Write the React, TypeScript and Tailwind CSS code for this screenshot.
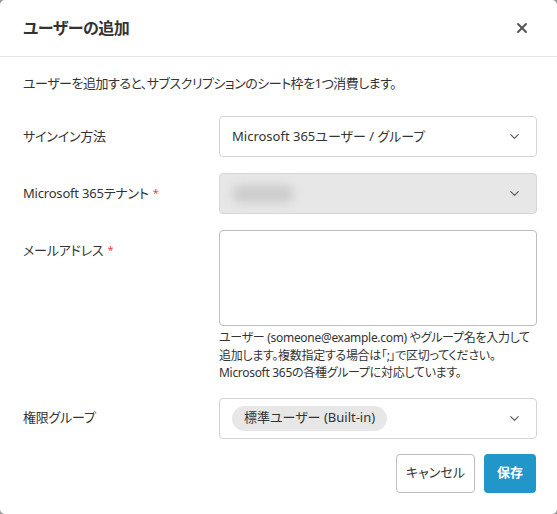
import { ChevronDown, X } from "lucide-react";

const font = { fontFamily: '"Noto Sans", "Noto Sans CJK JP", sans-serif' };

const Label = ({ text, required }: { text: string; required?: boolean }) => (
    <div className="h-[41px] flex items-center text-[13px] text-[#333] tracking-[-0.2px]">
        {text}
        {required && <span className="ml-[4px] text-[11px] text-[#e0484b]">*</span>}
    </div>
);

const SelectBox = ({ children, disabled }: { children?: React.ReactNode; disabled?: boolean }) => (
    <div
        className={`h-[41px] rounded-[4px] border flex items-center pl-[12px] pr-[14px] ${disabled ? "bg-[#e6e7e6] border-[#d6d6d6]" : "bg-white border-[#d3d3d3]"}`}
    >
        <div className="flex-1 flex items-center text-[13px] text-[#333]">{children}</div>
        <ChevronDown className="size-[15px] text-[#555]" strokeWidth={1.75} />
    </div>
);

export default function App() {
    return (
        <div className="h-[514px] w-[557px] bg-[#9a9a9a] [font-feature-settings:'palt']" style={font}>
            <div className="h-full w-full bg-white rounded-[5px] flex flex-col">
                <div className="h-[57px] px-[23px] pr-[27px] flex items-center justify-between border-b border-[#e4e4e4]">
                    <h2 className="text-[16px] font-bold text-[#333] tracking-[-0.5px]">ユーザーの追加</h2>
                    <X className="size-[16px] text-[#555]" strokeWidth={3} />
                </div>

                <div className="pl-[23px] pr-[20px] pt-[15px]">
                    <p className="text-[13px] text-[#333] leading-[22px] tracking-[-0.5px]">
                        ユーザーを追加すると、サブスクリプションのシート枠を1つ消費します。
                    </p>

                    <div className="mt-[22px] grid grid-cols-[196px_1fr] gap-y-[16px] items-start">
                        <Label text="サインイン方法" />
                        <SelectBox>Microsoft 365ユーザー / グループ</SelectBox>

                        <Label text="Microsoft 365テナント" required />
                        <SelectBox disabled>
                            <div className="w-[62px] h-[18px] rounded-full bg-[#cdcdcd] blur-[5px]" />
                        </SelectBox>

                        <Label text="メールアドレス" required />
                        <div>
                            <textarea className="block w-full h-[96px] rounded-[4px] border border-[#bdbdbd] resize-none outline-none" />
                            <p className="mt-[3px] text-[12px] leading-[17.5px] text-[#333] whitespace-nowrap tracking-[-0.3px]">
                                ユーザー (someone@example.com) やグループ名を入力して
                                <br />
                                追加します。複数指定する場合は「;」で区切ってください。
                                <br />
                                Microsoft 365の各種グループに対応しています。
                            </p>
                        </div>

                        <Label text="権限グループ" />
                        <SelectBox>
                            <span className="h-[25px] px-[12px] rounded-full bg-[#e6e7e6] flex items-center text-[13px] text-[#333]">
                                標準ユーザー (Built-in)
                            </span>
                        </SelectBox>
                    </div>

                    <div className="mt-[15px] flex justify-end gap-[9px] pr-[1px]">
                        <button className="h-[39px] w-[79px] rounded-[4px] border border-[#bdbdbd] bg-white text-[13px] text-[#333]">
                            キャンセル
                        </button>
                        <button className="h-[39px] w-[52px] rounded-[4px] bg-[#2196c9] text-[13px] font-bold text-white">
                            保存
                        </button>
                    </div>
                </div>
            </div>
        </div>
    );
}
